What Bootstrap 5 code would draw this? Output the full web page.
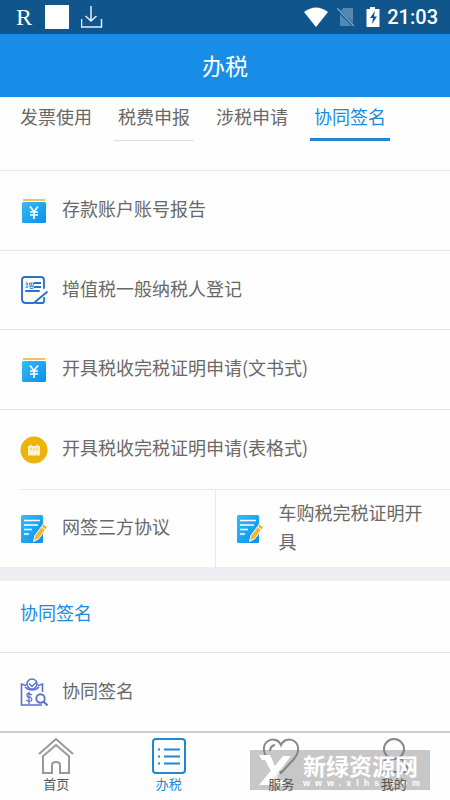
<!DOCTYPE html>
<html lang="zh-CN">
<head>
<meta charset="utf-8">
<meta name="viewport" content="width=device-width, initial-scale=1">
<title>办税</title>
<link rel="stylesheet" href="https://cdn.jsdelivr.net/npm/bootstrap@5.3.0/dist/css/bootstrap.min.css">
<style>
body{font-family:"Noto Sans CJK SC",sans-serif;font-weight:400;font-size:18px;line-height:29px;color:#686868;background:#fefefe}
svg{display:block;flex:none}
a{color:inherit;text-decoration:none}
.status{height:34px;background:#10558b;color:#fff;padding:0 12px 0 16px}
.brand-r{font:24px/34px "Liberation Serif",serif;width:17px}
.sq{width:24px;height:24px;background:#fff}
.clock{font:500 20px/34px Roboto,sans-serif}
.title{height:63px;background:#188de8;color:#fff;font-size:23px;font-weight:400;line-height:62px;margin:0}
.tabs{height:74px;padding-left:16px;gap:18px;border-bottom:1px solid #e9e9ec}
.tabs a{height:44px;padding:5px 4px 0;border-bottom:3px solid transparent;white-space:nowrap}
.tabs a.under{border-bottom:1px solid #dadfe9}
.tabs a.active{color:#1a8be0;border-bottom-color:#2386d0}
.entry{height:79px;padding:0 20px;gap:14px}
.entry span,.pair span{padding-bottom:4px}
.entry.line{border-bottom:1px solid #e6e6e9}
.entry.tall{height:80px}
.entry.final{height:78px}
.pair{display:grid;grid-template-columns:5fr 6fr;margin-left:20px;height:78px;border-top:1px solid #e8e8eb}
.pair a{gap:14px}
.pair a + a{border-left:1px solid #e8e8eb;padding:0 20px}
.band{height:14px;background:#eeeef2}
.sect{height:72px;padding:17px 20px;border-bottom:1px solid #e6e6e9;font-size:18px;font-weight:400;line-height:29px;color:#1a8be0}
.bottom{height:69px;border-top:2px solid #cbcbcb;background:#fefefe}
.bottom a{padding-top:4px;font-size:13px;line-height:18px;color:#555}
.bottom a.active{color:#1a86d8}
.bottom span{position:relative;z-index:3}
.stamp{position:absolute;right:20px;bottom:10px;width:180px;height:40px;z-index:2;background:rgba(125,125,125,.42);color:#fff;padding:2px 10px 0 7px;gap:12px}
.stamp-name{font-size:23px;font-weight:700;line-height:27px}
.stamp-url{font:700 9px/9px "Liberation Sans",sans-serif}
</style>
<script src="https://cdn.jsdelivr.net/npm/bootstrap@5.3.0/dist/js/bootstrap.bundle.min.js"></script>
</head>
<body>
<svg width="0" height="0" class="position-absolute" aria-hidden="true">
<defs>
<linearGradient id="blue" x1="0" y1="0" x2="1" y2="1"><stop stop-color="#36bcf4"/><stop offset="1" stop-color="#078ff0"/></linearGradient>
<symbol id="yen" viewBox="0 0 28 28"><path d="M3 2h22v2H3z" fill="#f3c25c"/><rect x="2" y="5" width="24" height="21" rx="1.5" fill="url(#blue)"/><path d="M10 9.500l4 5 4-5M14 14.500v7.500M10 15h8M10 18h8" fill="none" stroke="#fff" stroke-width="1.700"/></symbol>
<symbol id="doc" viewBox="0 0 28 28"><rect x="1" y="0" width="22" height="28" rx="1.500" fill="url(#blue)"/><path d="M4 5.500h16M4 10h14M4 14.500h8M4 19h5" stroke="#fff" stroke-width="1.700"/><path d="M13.500 26.500l1.500-6L23.500 9l4 3-9 12z" fill="#f4b52f" stroke="#fff" stroke-width="1"/><path d="M21.500 12l4 3" stroke="#fff"/></symbol>
</defs></svg>

<div class="status d-flex align-items-center justify-content-between">
  <div class="d-flex align-items-center gap-2">
    <span class="brand-r me-1">R</span><span class="sq"></span>
    <svg class="ms-1" width="24" height="24" viewBox="0 0 24 24" fill="none" stroke="#e4f0fa" stroke-width="1.500"><path d="M10 1v15M4.500 11l5.500 5 5.500-5M0.500 14v8h20v-8"/></svg>
  </div>
  <div class="d-flex align-items-center">
    <svg width="26" height="20" viewBox="0 0 26 20"><path d="M13 20L1 5Q13-4 25 5z" fill="#fff"/></svg>
    <svg class="ms-2" width="18" height="20" viewBox="0 0 18 20"><path d="M6 1h10v18H3V5z" fill="#5288b1"/><path d="M0 2l17 17" stroke="#10558b" stroke-width="3"/><path d="M0 1l17 18" stroke="#7ba5c5" stroke-width="1.300"/></svg>
    <svg class="ms-2 me-1" width="20" height="22" viewBox="0 0 20 22"><path d="M3.500 3H7V1h5v2h4.500v18h-13z" fill="#fff"/><path d="M12 5L7 12h3l-1 6 5-7.500h-3z" fill="#10558b"/></svg>
    <span class="clock">21:03</span>
  </div>
</div>
<h1 class="title text-center">办税</h1>

<nav class="tabs d-flex align-items-start">
  <a href="#">发票使用</a><a href="#" class="under">税费申报</a><a href="#">涉税申请</a><a href="#" class="active" aria-current="page">协同签名</a>
</nav>

<main>
  <a href="#" class="entry tall line d-flex align-items-center"><svg width="28" height="28"><use href="#yen"/></svg><span>存款账户账号报告</span></a>
  <a href="#" class="entry line d-flex align-items-center">
    <svg width="28" height="28" viewBox="0 0 28 28" fill="none" stroke="#2873c8" stroke-width="1.900"><path d="M24 12V4q0-3-3-3H5Q2 1 2 4v19q0 4 4 4h8M16 27h7q2-2 1-5M15 26l12-10M6 15h13" stroke-linecap="round"/><path d="M14 7h7M14 11h7"/><path d="M5.500 8h3M7 5.500v6M5.500 11.500l3-.7M9.500 7h4v2.300h-4zM10 10.500h3.200v2H10zM11.500 7v2" stroke-width=".8"/></svg>
    <span>增值税一般纳税人登记</span></a>
  <a href="#" class="entry tall line d-flex align-items-center"><svg width="28" height="28"><use href="#yen"/></svg><span>开具税收完税证明申请(文书式)</span></a>
  <a href="#" class="entry d-flex align-items-center">
    <svg width="28" height="28" viewBox="0 0 28 28"><circle cx="14" cy="14" r="13.500" fill="#edb20b"/><path d="M8 10h2V8.500h1.500V10h5V8.500H18V10h2v9.500H8z" fill="#fff4cf"/><path d="M11 11.500v3M14 11.500v3M17 11.500v3" stroke="#edb20b" stroke-width=".8"/></svg>
    <span>开具税收完税证明申请(表格式)</span></a>
  <div class="pair">
    <a href="#" class="d-flex align-items-center"><svg width="28" height="28"><use href="#doc"/></svg><span>网签三方协议</span></a>
    <a href="#" class="d-flex align-items-center"><svg width="28" height="28"><use href="#doc"/></svg><span>车购税完税证明开具</span></a>
  </div>
  <div class="band"></div>
  <h2 class="sect m-0">协同签名</h2>
  <a href="#" class="entry final d-flex align-items-center">
    <svg width="28" height="28" viewBox="0 0 28 28" fill="none" stroke="#5b6fd0" stroke-width="1.600"><path d="M6 7.500L1.500 6v21H22M22.500 14V6L18 7.500M5 9q3 3 7 3t7-3"/><circle cx="12" cy="6" r="5"/><path d="M9 5.500l3 3 4-4" stroke-width="1.400"/><path d="M12 17q-5-3-5 0t3 2q3 2 1 4-2 1-5-1M9 14v12" stroke-width="1.300"/><circle cx="20.500" cy="20.500" r="4.200" stroke-width="1.900"/><path d="M23.500 23.500l4 4" stroke-width="2"/></svg>
    <span>协同签名</span></a>
</main>

<footer class="position-relative">
  <nav class="bottom d-flex">
    <a href="#" class="col-3 d-flex flex-column align-items-center"><svg width="36" height="38" viewBox="0 0 36 38" fill="none" stroke="#999" stroke-width="2"><path d="M1 17L18 2l17 15M4 20L18 8l14 12M5 19v17h9V28q0-3 4-3t4 3v8h9V19"/></svg><span>首页</span></a>
    <a href="#" class="active col-3 d-flex flex-column align-items-center" aria-current="page"><svg width="36" height="38" viewBox="0 0 36 38" fill="none" stroke="#1f86d4" stroke-width="2"><rect x="2" y="2" width="32" height="34" rx="3"/><path d="M13 12.500h16M13 19.500h16M13 26.500h16M7 12.500h2M7 19.500h2M7 26.500h2"/></svg><span>办税</span></a>
    <a href="#" class="col-3 d-flex flex-column align-items-center"><svg width="36" height="38" viewBox="0 0 36 38" fill="none" stroke="#888" stroke-width="2"><path d="M18 36L5 22C-1 15 0 7 5 4C10 1 16 3 18 8C20 3 26 1 31 4C36 7 37 15 31 22zM7 14q0-5 5-6"/></svg><span>服务</span></a>
    <a href="#" class="col-3 d-flex flex-column align-items-center"><svg width="36" height="38" viewBox="0 0 36 38" fill="none" stroke="#888" stroke-width="2"><circle cx="18" cy="12" r="10"/><path d="M14 21C7 23 4 28 4 35h28c0-7-3-12-10-14"/></svg><span>我的</span></a>
  </nav>
  <div class="stamp d-flex">
    <svg width="34" height="36" viewBox="0 0 34 36" fill="#fff"><path d="M2 3h11l6 13-4 5L8 8H5zM26 4h8L12 33H2zM23 19l-4 9h6l5 4-4 2H13z"/></svg>
    <div class="flex-grow-1">
      <div class="stamp-name text-nowrap">新绿资源网</div>
      <div class="stamp-url d-flex justify-content-between"><span>w</span><span>w</span><span>w</span><span>.</span><span>x</span><span>l</span><span>h</span><span>s</span><span>.</span><span>c</span><span>o</span><span>m</span></div>
    </div>
  </div>
</footer>
</body>
</html>
